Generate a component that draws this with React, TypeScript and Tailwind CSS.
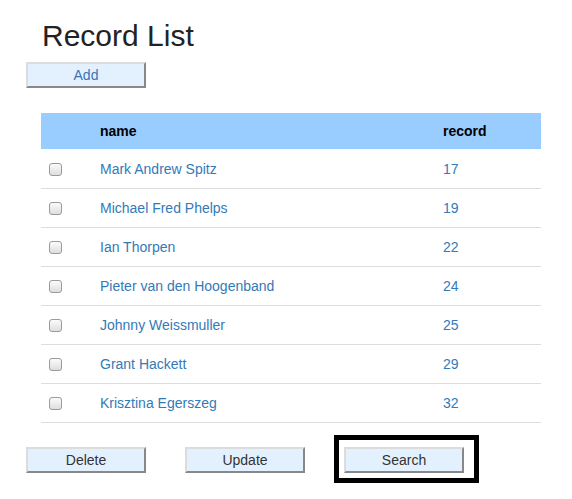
import React from "react";

type Swimmer = { name: string; record: number };

const rows: Swimmer[] = [
  { name: "Mark Andrew Spitz", record: 17 },
  { name: "Michael Fred Phelps", record: 19 },
  { name: "Ian Thorpen", record: 22 },
  { name: "Pieter van den Hoogenband", record: 24 },
  { name: "Johnny Weissmuller", record: 25 },
  { name: "Grant Hackett", record: 29 },
  { name: "Krisztina Egerszeg", record: 32 },
];

function Btn({ label, blue = false }: { label: string; blue?: boolean }) {
  return (
    <button
      className={`w-[120px] h-[26px] bg-[#e3f1ff] border-2 border-t-[#dcdcdc] border-l-[#dcdcdc] border-b-[#888888] border-r-[#888888] text-[14px] leading-none ${
        blue ? "text-[#3d72b8]" : "text-[#333333]"
      }`}
    >
      {label}
    </button>
  );
}

function Check() {
  return (
    <span className="block w-[13px] h-[13px] rounded-[3px] border border-[#9a9a9a] bg-gradient-to-b from-[#fbfbfb] to-[#dedede]" />
  );
}

export default function App() {
  return (
    <div className="w-[572px] h-[499px] bg-white font-['Liberation_Sans',Arial,sans-serif] flex flex-col">
      {/* Title */}
      <h1 className="ml-[42px] mt-[18px] text-[30px] leading-[36px] text-[#222222]">Record List</h1>
      <div className="ml-[26px] mt-[8px]">
        <Btn label="Add" blue />
      </div>

      {/* Table */}
      <div className="ml-[41px] mt-[25px] w-[500px] text-[14px]">
        <div className="flex items-center h-[36px] bg-[#99ccff] font-bold text-black">
          <div className="w-[59px]" />
          <div className="w-[343px]">name</div>
          <div>record</div>
        </div>
        <div className="mt-[1px]">
          {rows.map((r) => (
            <div key={r.name} className="flex items-center h-[39px] border-b border-[#dddddd] text-[#337ab7]">
              <div className="w-[59px] pl-[8px]">
                <Check />
              </div>
              <div className="w-[343px]">{r.name}</div>
              <div>{r.record}</div>
            </div>
          ))}
        </div>
      </div>

      {/* Actions */}
      <div className="ml-[26px] mt-[24px] flex gap-[39px]">
        <Btn label="Delete" />
        <Btn label="Update" />
        <div className="relative">
          <Btn label="Search" />
          <div className="absolute left-[-10px] top-[-12px] w-[145px] h-[48px] border-[5px] border-black" />
        </div>
      </div>
    </div>
  );
}
